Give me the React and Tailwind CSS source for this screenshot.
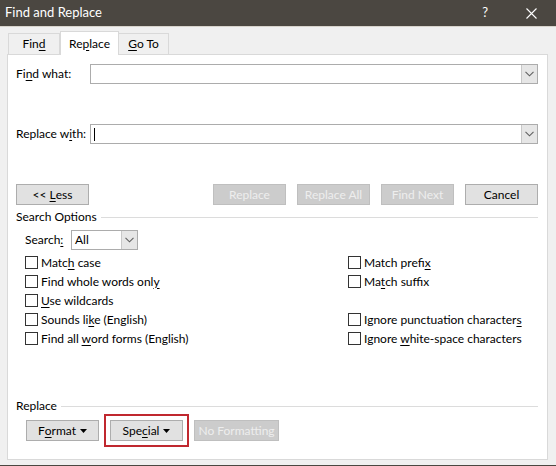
import React from 'react';

const Chevron = () => (
  <svg width="9" height="6" viewBox="0 0 9 6" fill="none">
    <path d="M0.5 0.8 L4.5 4.8 L8.5 0.8" stroke="#606060" strokeWidth="1.1" />
  </svg>
);

const Key = ({ children }) => <span className="underline underline-offset-[2px]">{children}</span>;

const Combo = ({ className = '', value = '', caret = false }) => (
  <div className={`flex h-[20px] items-stretch border border-[#acacac] bg-white ${className}`}>
    <div className="flex flex-1 items-center pl-[3px] text-[12px] text-black">
      {caret && <span className="block h-[13px] w-px bg-black" />}
      {value}
    </div>
    <div className="flex w-[16px] items-center justify-center border-l border-[#c8c8c8] bg-[#e6e6e6]">
      <Chevron />
    </div>
  </div>
);

const Btn = ({ children, disabled = false, className = '' }) => (
  <button
    className={`flex h-[21px] w-[73px] items-center justify-center whitespace-nowrap border text-[12px] ${
      disabled ? 'border-[#bfbfbf] bg-[#cccccc] text-[#eeeeee]' : 'border-[#adadad] bg-[#e1e1e1] text-black'
    } ${className}`}
  >
    <span className="flex items-center">{children}</span>
  </button>
);

const Caret = () => (
  <svg width="7" height="4" viewBox="0 0 7 4" className="ml-[4px]">
    <path d="M0 0 L7 0 L3.5 4 Z" fill="#000" />
  </svg>
);

const Check = ({ children }) => (
  <div className="flex h-[19px] items-center gap-[3px]">
    <span className="block h-[13px] w-[13px] border border-[#333] bg-white" />
    <span className="whitespace-nowrap text-[12px] text-black">{children}</span>
  </div>
);

const Section = ({ label, className = '' }) => (
  <div className={`flex items-center ${className}`}>
    <span className="text-[12px] leading-[16px] text-black">{label}</span>
    <span className="ml-[4px] h-px flex-1 bg-[#dcdcdc]" />
  </div>
);

export default function App() {
  return (
    <div
      className="flex h-[466px] w-[556px] flex-col overflow-hidden bg-[#f0f0f0]"
      style={{ fontFamily: 'Lato, "Noto Sans", sans-serif' }}
    >
      <div className="flex h-[26px] items-center bg-[#4b4741] pl-[5px] text-white">
        <span className="text-[13px]">Find and Replace</span>
        <span className="ml-auto mr-[38px] text-[13px]">?</span>
        <svg width="11" height="11" viewBox="0 0 11 11" className="mr-[19px]">
          <path d="M0.5 0.5 L10.5 10.5 M10.5 0.5 L0.5 10.5" stroke="#fff" strokeWidth="1.1" />
        </svg>
      </div>
      <div className="h-px bg-[#d8d4cc]" />

      <div className="flex h-[27px] items-end pl-[8px]">
        <div className="flex h-[21px] w-[52px] items-center justify-center border border-b-0 border-[#d9d9d9] bg-[#f0f0f0] text-[12px] text-black">
          <span>
            Fin<Key>d</Key>
          </span>
        </div>
        <div className="relative z-10 mb-[-1px] flex h-[24px] w-[59px] items-center justify-center border border-b-0 border-[#d9d9d9] bg-white text-[12px] text-black">
          <span>
            Re<Key>p</Key>lace
          </span>
        </div>
        <div className="flex h-[21px] w-[50px] items-center justify-center border border-b-0 border-l-0 border-[#d9d9d9] bg-[#f0f0f0] text-[12px] text-black">
          <span>
            <Key>G</Key>o To
          </span>
        </div>
      </div>

      <div className="ml-[7px] mr-[8px] flex h-[406px] flex-col border border-[#d9d9d9] bg-white pl-[8px] pr-[9px]">
        <div className="mt-[9px] flex items-center">
          <span className="w-[74px] whitespace-nowrap text-[12px] text-black">
            Fi<Key>n</Key>d what:
          </span>
          <Combo className="flex-1" />
        </div>
        <div className="mt-[40px] flex items-center">
          <span className="w-[74px] whitespace-nowrap text-[12px] text-black">
            Replace w<Key>i</Key>th:
          </span>
          <Combo className="flex-1" caret />
        </div>

        <div className="mt-[40px] flex items-center">
          <Btn>
            &lt;&lt;&nbsp;<Key>L</Key>ess
          </Btn>
          <div className="ml-auto flex gap-[11px]">
            <Btn disabled>Replace</Btn>
            <Btn disabled>Replace All</Btn>
            <Btn disabled>Find Next</Btn>
            <Btn>Cancel</Btn>
          </div>
        </div>

        <Section label="Search Options" className="mt-[4px]" />

        <div className="pl-[9px]">
          <div className="mt-[5px] flex items-center">
            <span className="w-[46px] text-[12px] text-black">
              Search<Key>:</Key>
            </span>
            <Combo className="w-[67px]" value="All" />
          </div>
          <div className="mt-[3px] flex">
            <div className="flex w-[323px] flex-col">
              <Check>
                Matc<Key>h</Key> case
              </Check>
              <Check>
                Find whole words onl<Key>y</Key>
              </Check>
              <Check>
                <Key>U</Key>se wildcards
              </Check>
              <Check>
                Sounds li<Key>k</Key>e (English)
              </Check>
              <Check>
                Find all <Key>w</Key>ord forms (English)
              </Check>
            </div>
            <div className="flex flex-col">
              <Check>
                Match prefi<Key>x</Key>
              </Check>
              <Check>
                Ma<Key>t</Key>ch suffix
              </Check>
              <div className="h-[19px]" />
              <Check>
                Ignore punctuation character<Key>s</Key>
              </Check>
              <Check>
                Ignore <Key>w</Key>hite-space characters
              </Check>
            </div>
          </div>
        </div>

        <Section label="Replace" className="mt-auto" />
        <div className="mb-[12px] flex items-center pl-[10px]">
          <Btn>
            F<Key>o</Key>rmat
            <Caret />
          </Btn>
          <div className="ml-[5px] border-2 border-[#c0282f] p-[4px]">
            <Btn>
              Spe<Key>c</Key>ial
              <Caret />
            </Btn>
          </div>
          <Btn disabled className="ml-[5px] w-[85px]">
            No Formatting
          </Btn>
        </div>
      </div>
      <div className="flex-1" />
      <div className="h-[1px] bg-[#4b4741]" />
    </div>
  );
}
